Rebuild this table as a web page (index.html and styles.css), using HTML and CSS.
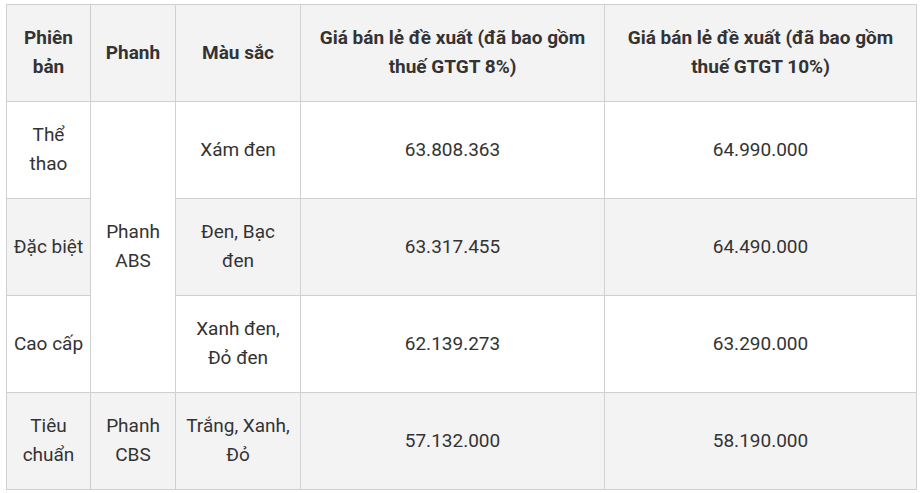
FILE: index.html
```html
<!DOCTYPE html>
<html lang="vi">
<head>
<meta charset="utf-8">
<link rel="stylesheet" href="styles.css">
</head>
<body>
<table class="price-table">
  <colgroup>
    <col class="c1"><col class="c2"><col class="c3"><col class="c4"><col class="c5">
  </colgroup>
  <thead>
    <tr>
      <th>Phiên bản</th>
      <th>Phanh</th>
      <th>Màu sắc</th>
      <th>Giá bán lẻ đề xuất (đã bao gồm thuế GTGT 8%)</th>
      <th>Giá bán lẻ đề xuất (đã bao gồm thuế GTGT 10%)</th>
    </tr>
  </thead>
  <tbody>
    <tr>
      <td>Thể thao</td>
      <td rowspan="3">Phanh ABS</td>
      <td>Xám đen</td>
      <td>63.808.363</td>
      <td>64.990.000</td>
    </tr>
    <tr class="alt">
      <td>Đặc biệt</td>
      <td>Đen, Bạc<br>đen</td>
      <td>63.317.455</td>
      <td>64.490.000</td>
    </tr>
    <tr>
      <td>Cao cấp</td>
      <td>Xanh đen,<br>Đỏ đen</td>
      <td>62.139.273</td>
      <td>63.290.000</td>
    </tr>
    <tr class="alt">
      <td>Tiêu chuẩn</td>
      <td>Phanh CBS</td>
      <td>Trắng, Xanh,<br>Đỏ</td>
      <td>57.132.000</td>
      <td>58.190.000</td>
    </tr>
  </tbody>
</table>
</body>
</html>
```

FILE: styles.css
```css
html, body {
  margin: 0;
  padding: 0;
  background: #ffffff;
}
body {
  padding: 4px 0 0 6px;
  font-family: Roboto, "Noto Sans", sans-serif;
  color: #333333;
}
.price-table {
  border-collapse: collapse;
  table-layout: fixed;
  width: 910px;
  font-size: 19px;
  line-height: 29px;
}
.c1 { width: 84px; }
.c2 { width: 85px; }
.c3 { width: 125px; }
.c4 { width: 304px; }
.c5 { width: 312px; }
.price-table th,
.price-table td {
  border: 1px solid #d0d0d0;
  text-align: center;
  vertical-align: middle;
  padding: 0 5px 2px;
  height: 97px;
  box-sizing: border-box;
}
.price-table th {
  background: #f3f3f3;
  font-weight: 700;
}
.price-table tr.alt td {
  background: #f3f3f3;
}
```
